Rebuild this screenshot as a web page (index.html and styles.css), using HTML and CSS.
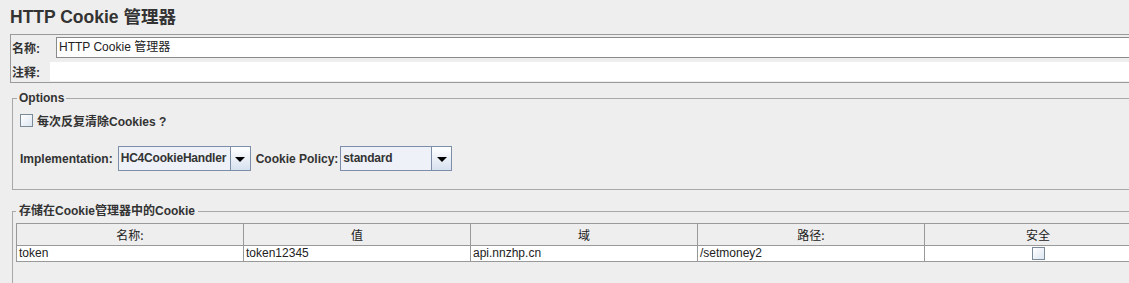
FILE: index.html
```html
<!DOCTYPE html>
<html>
<head>
<meta charset="utf-8">
<link rel="stylesheet" href="styles.css">
</head>
<body>
<div class="page">
  <h1 class="title">HTTP Cookie 管理器</h1>
  <div class="namebox">
    <div class="row name-row">
      <span class="lbl">名称:</span>
      <div class="input">HTTP Cookie 管理器</div>
    </div>
    <div class="row comment-row">
      <span class="lbl">注释:</span>
      <div class="input plain"></div>
    </div>
  </div>

  <fieldset class="group options">
    <legend>Options</legend>
    <div class="check-row">
      <span class="checkbox"></span>
      <span class="check-label">每次反复清除Cookies ?</span>
    </div>
    <div class="combo-row">
      <span class="lbl">Implementation:</span>
      <div class="combo impl">
        <span class="combo-text">HC4CookieHandler</span>
        <span class="combo-btn"><span class="tri"></span></span>
      </div>
      <span class="lbl policy">Cookie Policy:</span>
      <div class="combo pol">
        <span class="combo-text">standard</span>
        <span class="combo-btn"><span class="tri"></span></span>
      </div>
    </div>
  </fieldset>

  <fieldset class="group cookies">
    <legend>存储在Cookie管理器中的Cookie</legend>
    <table class="tbl">
      <thead>
        <tr><th>名称:</th><th>值</th><th>域</th><th>路径:</th><th>安全</th></tr>
      </thead>
      <tbody>
        <tr><td>token</td><td>token12345</td><td>api.nnzhp.cn</td><td>/setmoney2</td><td class="center"><span class="checkbox small"></span></td></tr>
      </tbody>
    </table>
  </fieldset>
</div>
</body>
</html>
```

FILE: styles.css
```css
html, body {
  margin: 0;
  padding: 0;
  background: #eeeeee;
  overflow: hidden;
  width: 1129px;
  height: 283px;
}
body {
  font-family: "Liberation Sans", Arial, "Noto Sans CJK SC", sans-serif;
  font-size: 12px;
  color: #333333;
}
.page {
  width: 1300px;
}
.title {
  margin: 0;
  padding: 7px 0 0 10px;
  height: 26px;
  font-size: 17.5px;
  font-weight: bold;
  line-height: 21px;
  color: #333;
}
.namebox {
  margin: 1px 0 0 10px;
  border: 1px solid #9a9a9a;
  border-right: none;
  height: 47px;
  display: flex;
  flex-direction: column;
}
.row {
  display: flex;
  align-items: center;
}
.name-row {
  margin-top: 2px;
  height: 21px;
}
.comment-row {
  margin-top: 4px;
  height: 19px;
}
.lbl {
  font-weight: bold;
  color: #333;
  white-space: nowrap;
}
.namebox .lbl {
  padding-left: 1px;
  width: 44px;
  flex: none;
}
.comment-row .lbl {
  width: 38px;
}
.input {
  flex: 1;
  height: 19px;
  background: #fff;
  border: 1px solid #8a8a8a;
  border-right: none;
  line-height: 19px;
  padding-left: 2px;
  color: #222;
  font-size: 12px;
}
.input.plain {
  border: none;
  height: 19px;
}
.group {
  margin: 8px 0 0 12px;
  padding: 0 0 0 4px;
  border: 1px solid #a8a8a8;
  border-right: none;
  width: 1250px;
  box-sizing: border-box;
}
.group legend {
  padding: 0 2px;
  font-weight: bold;
  color: #333;
  line-height: 14px;
  font-size: 12px;
}
.options {
  height: 99px;
}
.check-row {
  display: flex;
  align-items: center;
  margin: 7px 0 0 3px;
  height: 16px;
}
.checkbox {
  display: inline-block;
  width: 11px;
  height: 11px;
  border: 1px solid #7a8a99;
  background: linear-gradient(135deg, #ffffff 0%, #dde6f1 100%);
}
.check-label {
  margin-left: 4px;
  font-weight: bold;
  color: #333;
}
.combo-row {
  display: flex;
  align-items: center;
  margin: 18px 0 0 3px;
  height: 25px;
}
.combo {
  display: flex;
  height: 23px;
  border: 1px solid #7d8fa8;
  margin-left: 5px;
  box-sizing: content-box;
}
.combo.impl { width: 131px; }
.combo.pol { width: 110px; margin-left: 2px; }
.policy { margin-left: 5px; }
.combo-text {
  flex: 1;
  background: #eef1f8;
  line-height: 23px;
  padding-left: 2px;
  font-weight: bold;
  color: #333;
  white-space: nowrap;
  overflow: hidden;
  letter-spacing: -0.2px;
}
.combo-btn {
  width: 19px;
  border-left: 1px solid #7d8fa8;
  background: linear-gradient(#ffffff, #d7e1ef);
  display: flex;
  align-items: center;
  justify-content: center;
}
.tri {
  width: 0;
  height: 0;
  border-left: 5px solid transparent;
  border-right: 5px solid transparent;
  border-top: 5px solid #000;
  margin-top: 1px;
}
.cookies {
  margin-top: 14px;
  padding-left: 3px;
  height: 120px;
}
.cookies legend {
  padding: 0 3px;
}
.tbl {
  margin: 5px 0 0 0;
  border-collapse: collapse;
  table-layout: fixed;
  width: 1135px;
  font-size: 12px;
}
.tbl th, .tbl td {
  border: 1px solid #999;
  width: 222px;
  padding: 0 2px;
  overflow: hidden;
  white-space: nowrap;
}
.tbl th {
  background: #eeeeee;
  font-weight: normal;
  height: 20px;
  color: #222;
  text-align: center;
  font-family: "Noto Sans CJK SC", sans-serif;
  font-size: 12px;
  line-height: 20px;
  padding-top: 1px;
}
.tbl td {
  background: #fff;
  height: 15px;
  line-height: 15px;
  color: #222;
}
.tbl td.center {
  text-align: center;
}
.checkbox.small {
  width: 11px;
  height: 11px;
  vertical-align: middle;
}
```
